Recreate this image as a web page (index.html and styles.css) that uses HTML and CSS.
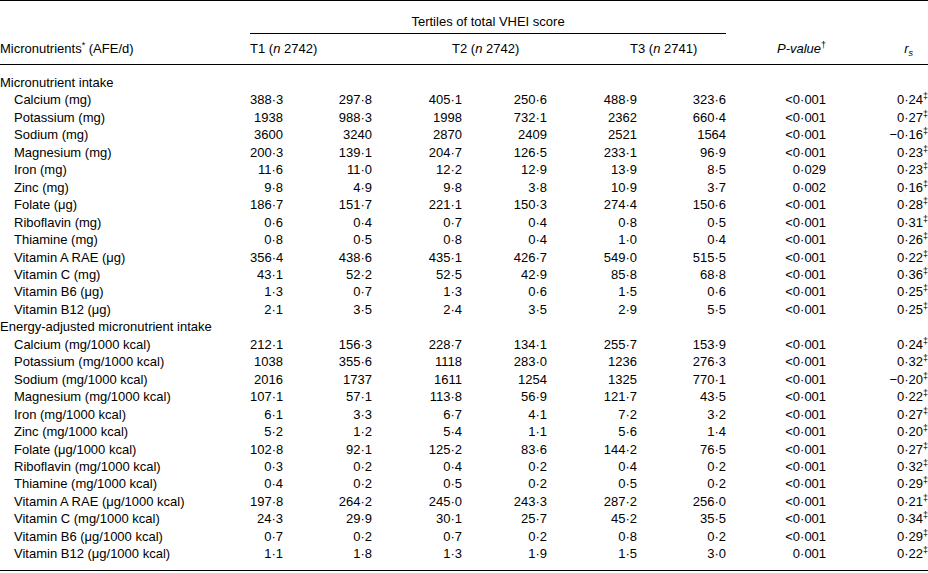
FILE: index.html
```html
<!DOCTYPE html>
<html>
<head>
<meta charset="utf-8">
<link rel="stylesheet" href="styles.css">
</head>
<body>
<table class="tbl">
  <colgroup>
    <col class="c-label"><col class="c1"><col class="c2"><col class="c3"><col class="c4"><col class="c5"><col class="c6"><col class="c7"><col class="c8">
  </colgroup>
  <thead>
    <tr class="row-group">
      <th></th>
      <th colspan="6" class="group">Tertiles of total VHEI score</th>
      <th></th>
      <th></th>
    </tr>
    <tr class="row-head">
      <th class="h-label">Micronutrients<span class="sup">*</span> (AFE/d)</th>
      <th colspan="2" class="h-t1">T1 (<i>n</i> 2742)</th>
      <th colspan="2" class="h-t2">T2 (<i>n</i> 2742)</th>
      <th colspan="2" class="h-t3">T3 (<i>n</i> 2741)</th>
      <th class="h-p"><i>P-value</i><span class="sup">†</span></th>
      <th class="h-r"><i>r<sub class="sub">s</sub></i></th>
    </tr>
  </thead>
  <tbody>
    <tr class="first"><td class="section" colspan="9">Micronutrient intake</td></tr>
    <tr><td class="lbl">Calcium (mg)</td><td>388·3</td><td>297·8</td><td>405·1</td><td>250·6</td><td>488·9</td><td>323·6</td><td>&lt;0·001</td><td class="r">0·24<span class="sup">‡</span></td></tr>
    <tr><td class="lbl">Potassium (mg)</td><td>1938</td><td>988·3</td><td>1998</td><td>732·1</td><td>2362</td><td>660·4</td><td>&lt;0·001</td><td class="r">0·27<span class="sup">‡</span></td></tr>
    <tr><td class="lbl">Sodium (mg)</td><td>3600</td><td>3240</td><td>2870</td><td>2409</td><td>2521</td><td>1564</td><td>&lt;0·001</td><td class="r">−0·16<span class="sup">‡</span></td></tr>
    <tr><td class="lbl">Magnesium (mg)</td><td>200·3</td><td>139·1</td><td>204·7</td><td>126·5</td><td>233·1</td><td>96·9</td><td>&lt;0·001</td><td class="r">0·23<span class="sup">‡</span></td></tr>
    <tr><td class="lbl">Iron (mg)</td><td>11·6</td><td>11·0</td><td>12·2</td><td>12·9</td><td>13·9</td><td>8·5</td><td>0·029</td><td class="r">0·23<span class="sup">‡</span></td></tr>
    <tr><td class="lbl">Zinc (mg)</td><td>9·8</td><td>4·9</td><td>9·8</td><td>3·8</td><td>10·9</td><td>3·7</td><td>0·002</td><td class="r">0·16<span class="sup">‡</span></td></tr>
    <tr><td class="lbl">Folate (μg)</td><td>186·7</td><td>151·7</td><td>221·1</td><td>150·3</td><td>274·4</td><td>150·6</td><td>&lt;0·001</td><td class="r">0·28<span class="sup">‡</span></td></tr>
    <tr><td class="lbl">Riboflavin (mg)</td><td>0·6</td><td>0·4</td><td>0·7</td><td>0·4</td><td>0·8</td><td>0·5</td><td>&lt;0·001</td><td class="r">0·31<span class="sup">‡</span></td></tr>
    <tr><td class="lbl">Thiamine (mg)</td><td>0·8</td><td>0·5</td><td>0·8</td><td>0·4</td><td>1·0</td><td>0·4</td><td>&lt;0·001</td><td class="r">0·26<span class="sup">‡</span></td></tr>
    <tr><td class="lbl">Vitamin A RAE (μg)</td><td>356·4</td><td>438·6</td><td>435·1</td><td>426·7</td><td>549·0</td><td>515·5</td><td>&lt;0·001</td><td class="r">0·22<span class="sup">‡</span></td></tr>
    <tr><td class="lbl">Vitamin C (mg)</td><td>43·1</td><td>52·2</td><td>52·5</td><td>42·9</td><td>85·8</td><td>68·8</td><td>&lt;0·001</td><td class="r">0·36<span class="sup">‡</span></td></tr>
    <tr><td class="lbl">Vitamin B6 (μg)</td><td>1·3</td><td>0·7</td><td>1·3</td><td>0·6</td><td>1·5</td><td>0·6</td><td>&lt;0·001</td><td class="r">0·25<span class="sup">‡</span></td></tr>
    <tr><td class="lbl">Vitamin B12 (μg)</td><td>2·1</td><td>3·5</td><td>2·4</td><td>3·5</td><td>2·9</td><td>5·5</td><td>&lt;0·001</td><td class="r">0·25<span class="sup">‡</span></td></tr>
    <tr><td class="section" colspan="9">Energy-adjusted micronutrient intake</td></tr>
    <tr><td class="lbl">Calcium (mg/1000 kcal)</td><td>212·1</td><td>156·3</td><td>228·7</td><td>134·1</td><td>255·7</td><td>153·9</td><td>&lt;0·001</td><td class="r">0·24<span class="sup">‡</span></td></tr>
    <tr><td class="lbl">Potassium (mg/1000 kcal)</td><td>1038</td><td>355·6</td><td>1118</td><td>283·0</td><td>1236</td><td>276·3</td><td>&lt;0·001</td><td class="r">0·32<span class="sup">‡</span></td></tr>
    <tr><td class="lbl">Sodium (mg/1000 kcal)</td><td>2016</td><td>1737</td><td>1611</td><td>1254</td><td>1325</td><td>770·1</td><td>&lt;0·001</td><td class="r">−0·20<span class="sup">‡</span></td></tr>
    <tr><td class="lbl">Magnesium (mg/1000 kcal)</td><td>107·1</td><td>57·1</td><td>113·8</td><td>56·9</td><td>121·7</td><td>43·5</td><td>&lt;0·001</td><td class="r">0·22<span class="sup">‡</span></td></tr>
    <tr><td class="lbl">Iron (mg/1000 kcal)</td><td>6·1</td><td>3·3</td><td>6·7</td><td>4·1</td><td>7·2</td><td>3·2</td><td>&lt;0·001</td><td class="r">0·27<span class="sup">‡</span></td></tr>
    <tr><td class="lbl">Zinc (mg/1000 kcal)</td><td>5·2</td><td>1·2</td><td>5·4</td><td>1·1</td><td>5·6</td><td>1·4</td><td>&lt;0·001</td><td class="r">0·20<span class="sup">‡</span></td></tr>
    <tr><td class="lbl">Folate (μg/1000 kcal)</td><td>102·8</td><td>92·1</td><td>125·2</td><td>83·6</td><td>144·2</td><td>76·5</td><td>&lt;0·001</td><td class="r">0·27<span class="sup">‡</span></td></tr>
    <tr><td class="lbl">Riboflavin (mg/1000 kcal)</td><td>0·3</td><td>0·2</td><td>0·4</td><td>0·2</td><td>0·4</td><td>0·2</td><td>&lt;0·001</td><td class="r">0·32<span class="sup">‡</span></td></tr>
    <tr><td class="lbl">Thiamine (mg/1000 kcal)</td><td>0·4</td><td>0·2</td><td>0·5</td><td>0·2</td><td>0·5</td><td>0·2</td><td>&lt;0·001</td><td class="r">0·29<span class="sup">‡</span></td></tr>
    <tr><td class="lbl">Vitamin A RAE (μg/1000 kcal)</td><td>197·8</td><td>264·2</td><td>245·0</td><td>243·3</td><td>287·2</td><td>256·0</td><td>&lt;0·001</td><td class="r">0·21<span class="sup">‡</span></td></tr>
    <tr><td class="lbl">Vitamin C (mg/1000 kcal)</td><td>24·3</td><td>29·9</td><td>30·1</td><td>25·7</td><td>45·2</td><td>35·5</td><td>&lt;0·001</td><td class="r">0·34<span class="sup">‡</span></td></tr>
    <tr><td class="lbl">Vitamin B6 (μg/1000 kcal)</td><td>0·7</td><td>0·2</td><td>0·7</td><td>0·2</td><td>0·8</td><td>0·2</td><td>&lt;0·001</td><td class="r">0·29<span class="sup">‡</span></td></tr>
    <tr class="last"><td class="lbl">Vitamin B12 (μg/1000 kcal)</td><td>1·1</td><td>1·8</td><td>1·3</td><td>1·9</td><td>1·5</td><td>3·0</td><td>0·001</td><td class="r">0·22<span class="sup">‡</span></td></tr>
  </tbody>
</table>
</body>
</html>
```

FILE: styles.css
```css
html, body {
  margin: 0;
  padding: 0;
  background: #ffffff;
}

body {
  font-family: "Liberation Sans", Arial, sans-serif;
  font-size: 13px;
  color: #000000;
}

.tbl {
  width: 928px;
  table-layout: fixed;
  border-collapse: separate;
  border-spacing: 0;
  border-top: 1px solid #000;
  border-bottom: 1px solid #000;
}

.c-label { width: 250px; }
.c1 { width: 33px; }
.c2 { width: 89px; }
.c3 { width: 90px; }
.c4 { width: 85px; }
.c5 { width: 90px; }
.c6 { width: 89px; }
.c7 { width: 100px; }
.c8 { width: 102px; }

.tbl th {
  font-weight: normal;
  line-height: 17px;
  padding: 0;
  white-space: nowrap;
}

.row-group th {
  padding-top: 12px;
  padding-bottom: 3px;
}

.row-group .group {
  text-align: center;
  border-bottom: 1px solid #000;
}

.row-head th {
  padding-top: 6px;
  padding-bottom: 7px;
  border-bottom: 1px solid #000;
  text-align: left;
}

.row-head .h-t1 { padding-left: 0; }
.row-head .h-t2 { padding-left: 80px; }
.row-head .h-t3 { padding-left: 83px; }
.row-head .h-p { text-align: right; }
.row-head .h-r { text-align: right; padding-right: 15px; }

.tbl td {
  line-height: 17.45px;
  padding: 0;
  text-align: right;
  white-space: nowrap;
}

.tbl td.lbl {
  text-align: left;
  padding-left: 14px;
}

.tbl td.section {
  text-align: left;
}

.tbl td.r {
  padding-right: 0;
}

.first td { padding-top: 9px; }
.last td { padding-bottom: 7px; }

.sup {
  font-size: 9px;
  line-height: 0;
  vertical-align: 5px;
}

.sub {
  font-size: 9px;
  line-height: 0;
  vertical-align: -3px;
}
```
